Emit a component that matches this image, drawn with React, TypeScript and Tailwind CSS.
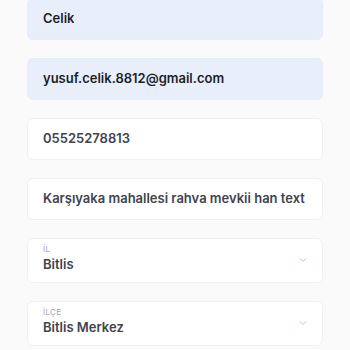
import { ChevronDown } from "lucide-react";

const font = { fontFamily: "Inter, 'Noto Sans', sans-serif" };

function TextField({ value, filled }: { value: string; filled?: boolean }) {
	return (
		<div
			className={`flex h-[42px] items-center overflow-hidden rounded-md border pl-[15px] pr-[12px] ${
				filled
					? "border-[#e6edf9] bg-[#e8effb] text-[#1c1f26]"
					: "border-[#f0f0f0] bg-white text-[#3f444d]"
			}`}
		>
			<span className="overflow-hidden whitespace-nowrap font-semibold text-[13px]">
				{value}
			</span>
		</div>
	);
}

function SelectField({ label, value }: { label: string; value: string }) {
	return (
		<div className="flex h-[45px] items-center justify-between rounded-md border border-[#f0f0f0] bg-white pr-[13px] pl-[15px]">
			<div className="flex flex-col self-start pt-[5px]">
				<span className="text-[#a3a7ad] text-[8px] leading-[10px] tracking-[0.3px]">
					{label}
				</span>
				<span className="font-semibold text-[#3f444d] text-[13px] leading-[20px]">
					{value}
				</span>
			</div>
			<ChevronDown size={12} className="-mt-[2px] text-[#7fc9b8]" strokeWidth={1.6} />
		</div>
	);
}

export default function App() {
	return (
		<div className="h-[350px] w-[350px] overflow-hidden bg-[#fafafa]" style={font}>
			<div className="-mt-[2px] flex flex-col gap-[18px] px-[27px]">
				<TextField value="Celik" filled />
				<TextField value="yusuf.celik.8812@gmail.com" filled />
				<TextField value="05525278813" />
				<TextField value="Karşıyaka mahallesi rahva mevkii han text" />
				<SelectField label="İL" value="Bitlis" />
				<SelectField label="İLÇE" value="Bitlis Merkez" />
			</div>
		</div>
	);
}
